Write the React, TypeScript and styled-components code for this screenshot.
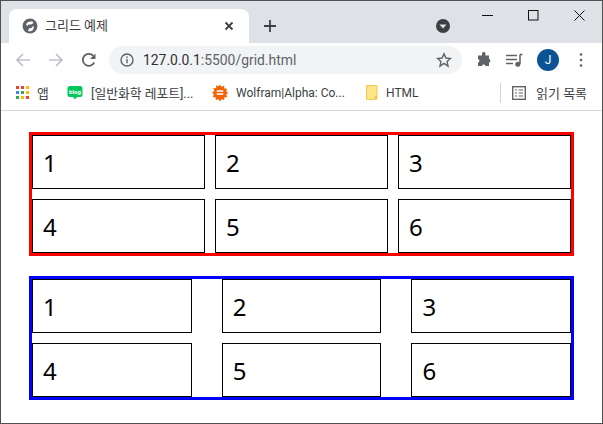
import styled, { createGlobalStyle } from 'styled-components';

const GlobalStyle = createGlobalStyle`
  html, body { margin: 0; padding: 0; background: #fff; }
  body { font-family: Roboto, "Noto Sans CJK KR", sans-serif; }
`;

const cells = ['1', '2', '3', '4', '5', '6'];

function App() {
  return (
    <Window>
      <GlobalStyle />
      <TitleBar>
        <Tab>
          <svg width="16" height="16" viewBox="0 0 16 16">
            <circle cx="8" cy="8" r="7.5" fill="#5f6368" />
            <path d="M4 6.500c1-2.500 3-3.500 6.500-3l1 1.500-2.500 1.500-2.500 0-1 1.500zM12 8.500l-1 3.500-3 1.500-2-.5 1-2.500 2.500-.5 1-1.500z" fill="#fff" />
          </svg>
          <TabTitle>그리드 예제</TabTitle>
          <svg width="10" height="10" viewBox="0 0 10 10">
            <path d="M1.500 1.500l7 7M8.500 1.500l-7 7" stroke="#3c4043" strokeWidth="1.800" />
          </svg>
        </Tab>
        <NewTab>
          <svg width="12" height="12" viewBox="0 0 12 12">
            <path d="M6 0v12M0 6h12" stroke="#3c4043" strokeWidth="1.800" />
          </svg>
        </NewTab>
        <Caret>
          <svg width="14" height="14" viewBox="0 0 14 14">
            <circle cx="7" cy="7" r="7" fill="#3c4043" />
            <path d="M3.500 5.500h7L7 9.500z" fill="#dee1e6" />
          </svg>
        </Caret>
        <WindowControls>
          <WindowButton>
            <svg width="11" height="11" viewBox="0 0 11 11"><path d="M0 5.500h11" stroke="#111" /></svg>
          </WindowButton>
          <WindowButton>
            <svg width="11" height="11" viewBox="0 0 11 11"><rect x="0.500" y="0.500" width="9.500" height="9.500" fill="none" stroke="#111" /></svg>
          </WindowButton>
          <WindowButton>
            <svg width="11" height="11" viewBox="0 0 11 11"><path d="M0.500 0.500l10 10M10.500 0.500l-10 10" stroke="#111" /></svg>
          </WindowButton>
        </WindowControls>
      </TitleBar>

      <Toolbar>
        <NavIcon>
          <svg width="16" height="16" viewBox="0 0 16 16">
            <path d="M15 8H2M8 2L2 8l6 6" fill="none" stroke="#bdc1c6" strokeWidth="1.700" />
          </svg>
        </NavIcon>
        <NavIcon>
          <svg width="16" height="16" viewBox="0 0 16 16">
            <path d="M1 8h13M8 2l6 6-6 6" fill="none" stroke="#bdc1c6" strokeWidth="1.700" />
          </svg>
        </NavIcon>
        <NavIcon>
          <svg width="16" height="16" viewBox="0 0 16 16">
            <path d="M13.200 10.500A6 6 0 1 1 12.300 3.800" fill="none" stroke="#5f6368" strokeWidth="1.800" />
            <path d="M14.500 1.500v5.500H9z" fill="#5f6368" />
          </svg>
        </NavIcon>
        <Omnibox>
          <svg width="14" height="14" viewBox="0 0 14 14">
            <circle cx="7" cy="7" r="6" fill="none" stroke="#5f6368" strokeWidth="1.400" />
            <path d="M7 6v4.200M7 3.600v1.400" stroke="#5f6368" strokeWidth="1.400" />
          </svg>
          <Url>127.0.0.1<UrlRest>:5500/grid.html</UrlRest></Url>
          <svg width="16" height="16" viewBox="0 0 16 16">
            <path d="M8 1.800l1.900 4.200 4.600.5-3.400 3.100.9 4.500L8 11.400l-4 2.700.9-4.500L1.500 6.500l4.600-.5z" fill="none" stroke="#5f6368" strokeWidth="1.400" />
          </svg>
        </Omnibox>
        <ToolIcons>
          <svg width="16" height="16" viewBox="0 0 16 16">
            <path d="M6 1.500a1.800 1.800 0 0 1 3.500 0V3.500h3.500v3.500a1.800 1.800 0 0 1 0 3.500V14H9.500a1.800 1.800 0 0 0-3.500 0H2V10.500a1.800 1.800 0 0 0 0-3.500V3.500H6z" fill="#5f6368" />
          </svg>
          <svg width="17" height="16" viewBox="0 0 17 16">
            <path d="M0 3.500h11M0 7.500h11M0 11.500h7" stroke="#5f6368" strokeWidth="1.400" />
            <path d="M14 2.500h2.500M14 2.500v9.500" stroke="#5f6368" strokeWidth="1.500" fill="none" />
            <circle cx="11.800" cy="12.300" r="2.500" fill="#5f6368" />
          </svg>
          <Avatar>J</Avatar>
          <MenuDots width="4" height="16" viewBox="0 0 4 16">
            <circle cx="2" cy="2.500" r="1.300" fill="#5f6368" />
            <circle cx="2" cy="8" r="1.300" fill="#5f6368" />
            <circle cx="2" cy="13.500" r="1.300" fill="#5f6368" />
          </MenuDots>
        </ToolIcons>
      </Toolbar>

      <BookmarkBar>
        <Bookmark $width={51} $size={12.800}>
          <svg width="13" height="13" viewBox="0 0 13 13">
            <rect x="0" y="0" width="3" height="3" fill="#ea4335" />
            <rect x="5" y="0" width="3" height="3" fill="#ea4335" />
            <rect x="10" y="0" width="3" height="3" fill="#fbbc04" />
            <rect x="0" y="5" width="3" height="3" fill="#4285f4" />
            <rect x="5" y="5" width="3" height="3" fill="#34a853" />
            <rect x="10" y="5" width="3" height="3" fill="#fbbc04" />
            <rect x="0" y="10" width="3" height="3" fill="#34a853" />
            <rect x="5" y="10" width="3" height="3" fill="#fbbc04" />
            <rect x="10" y="10" width="3" height="3" fill="#ea4335" />
          </svg>
          앱
        </Bookmark>
        <Bookmark $width={145} $size={12.800}>
          <svg width="16" height="16" viewBox="0 0 16 16">
            <path d="M3 1h10A2.500 2.500 0 0 1 15.500 3.500v6A2.500 2.500 0 0 1 13 12h-3l-2 2.500L6 12H3A2.500 2.500 0 0 1 .5 9.500v-6A2.500 2.500 0 0 1 3 1z" fill="#03c75a" />
            <text x="8" y="8.800" textAnchor="middle" fontSize="6" fontWeight="700" fontFamily="Roboto, sans-serif" fill="#fff">blog</text>
          </svg>
          [일반화학 레포트]...
        </Bookmark>
        <Bookmark $width={154} $size={12}>
          <svg width="16" height="17" viewBox="0 0 17 17">
            <path d="M8.500 0l1.700 2.400 2.700-1 .3 2.900 2.900.3-1 2.700 2.400 1.700-2.400 1.700 1 2.700-2.900.3-.3 2.900-2.700-1-1.700 2.400-1.700-2.400-2.700 1-.3-2.900-2.900-.3 1-2.700L0 8.500l2.400-1.700-1-2.700 2.900-.3.3-2.900 2.700 1z" fill="#f2640a" />
            <path d="M5 7h7M5 10h7" stroke="#fff" strokeWidth="1.600" />
          </svg>
          Wolfram|Alpha: Co...
        </Bookmark>
        <Bookmark $width={134} $size={12}>
          <svg width="12" height="15" viewBox="0 0 12 15">
            <path d="M0.500 0.500h10.500v11h-2v3h-8.500z" fill="#fde68a" stroke="#f0c94f" />
            <rect x="9" y="11.500" width="2.500" height="3" fill="#f0c94f" />
          </svg>
          HTML
        </Bookmark>
        <ReadingList>
          <svg width="14" height="14" viewBox="0 0 14 14">
            <rect x="0.700" y="0.700" width="12.600" height="12.600" fill="none" stroke="#5f6368" strokeWidth="1.400" />
            <path d="M3 4h2M6.500 4H11M3 7h2M6.500 7H11M3 10h2M6.500 10H11" stroke="#5f6368" strokeWidth="1.200" />
          </svg>
          읽기 목록
        </ReadingList>
      </BookmarkBar>

      <Page>
        <Grid $color="red" $columns="repeat(3, 173px)" $justify="normal">
          {cells.map((c) => <Cell key={c}>{c}</Cell>)}
        </Grid>
        <Grid $color="blue" $columns="repeat(3, 159.6px)" $justify="space-between">
          {cells.map((c) => <Cell key={c}>{c}</Cell>)}
        </Grid>
      </Page>
    </Window>
  );
}

const Window = styled.div`
  box-sizing: border-box;
  width: 603px;
  height: 424px;
  border: 1px solid #505050;
  overflow: hidden;
  background: #fff;
`;

const TitleBar = styled.div`
  display: flex;
  align-items: flex-start;
  height: 42px;
  padding-left: 8px;
  background: #dee1e6;
`;

const Tab = styled.div`
  box-sizing: border-box;
  display: flex;
  align-items: center;
  width: 240px;
  height: 34px;
  margin-top: 8px;
  padding: 0 15px 0 13px;
  background: #fff;
  border-radius: 8px 8px 0 0;
`;

const TabTitle = styled.span`
  flex: 1;
  margin-left: 7px;
  padding-bottom: 3px;
  font-size: 13px;
  color: #3c4043;
`;

const NewTab = styled.div`
  display: flex;
  margin: 19px 0 0 15px;
`;

const Caret = styled.div`
  display: flex;
  margin: 18px 0 0 160px;
`;

const WindowControls = styled.div`
  display: flex;
  margin-left: auto;
`;

const WindowButton = styled.div`
  display: flex;
  justify-content: center;
  width: 46px;
  padding-top: 9px;
`;

const Toolbar = styled.div`
  display: flex;
  align-items: center;
  height: 34px;
  padding-left: 14px;
`;

const NavIcon = styled.div`
  display: flex;
  width: 32px;
  margin-right: 1px;
`;

const Omnibox = styled.div`
  box-sizing: border-box;
  display: flex;
  align-items: center;
  width: 353px;
  height: 28px;
  margin-left: -5px;
  padding: 0 10px 0 11px;
  background: #f1f3f4;
  border-radius: 14px;
`;

const Url = styled.div`
  flex: 1;
  margin-left: 9px;
  font-size: 13.9px;
  color: #303134;
`;

const UrlRest = styled.span`
  color: #5f6368;
`;

const ToolIcons = styled.div`
  display: flex;
  align-items: center;
  gap: 14px;
  margin-left: 14px;
`;

const MenuDots = styled.svg`
  margin-left: 6px;
`;

const Avatar = styled.div`
  display: flex;
  align-items: center;
  justify-content: center;
  width: 22px;
  height: 22px;
  border-radius: 50%;
  background: #0b5394;
  color: #fff;
  font-size: 12px;
`;

const BookmarkBar = styled.div`
  box-sizing: border-box;
  display: flex;
  align-items: center;
  height: 34px;
  padding: 0 0 2px 15px;
  border-bottom: 1px solid #d5d7da;
  color: #3c4043;
`;

const Bookmark = styled.div<{ $width: number; $size: number }>`
  display: flex;
  align-items: center;
  gap: 8px;
  width: ${(p) => p.$width}px;
  font-size: ${(p) => p.$size}px;
  white-space: nowrap;
`;

const ReadingList = styled.div`
  display: flex;
  align-items: center;
  gap: 10px;
  height: 20px;
  padding-left: 11px;
  border-left: 1px solid #d0d2d5;
  font-size: 13px;
  white-space: nowrap;
`;

const Page = styled.div`
  display: flex;
  flex-direction: column;
  gap: 20px;
  padding: 21px 28px 0;
`;

const Grid = styled.div<{ $color: string; $columns: string; $justify: string }>`
  box-sizing: border-box;
  display: grid;
  grid-template-columns: ${(p) => p.$columns};
  justify-content: ${(p) => p.$justify};
  gap: 10px;
  width: 545px;
  border: 3px solid ${(p) => p.$color};
`;

const Cell = styled.div`
  box-sizing: border-box;
  height: 54px;
  padding: 10px;
  border: 1px solid #000;
  font-family: "Noto Sans", sans-serif;
  font-size: 24px;
  line-height: 34px;
  color: #000;
`;

export default App;
